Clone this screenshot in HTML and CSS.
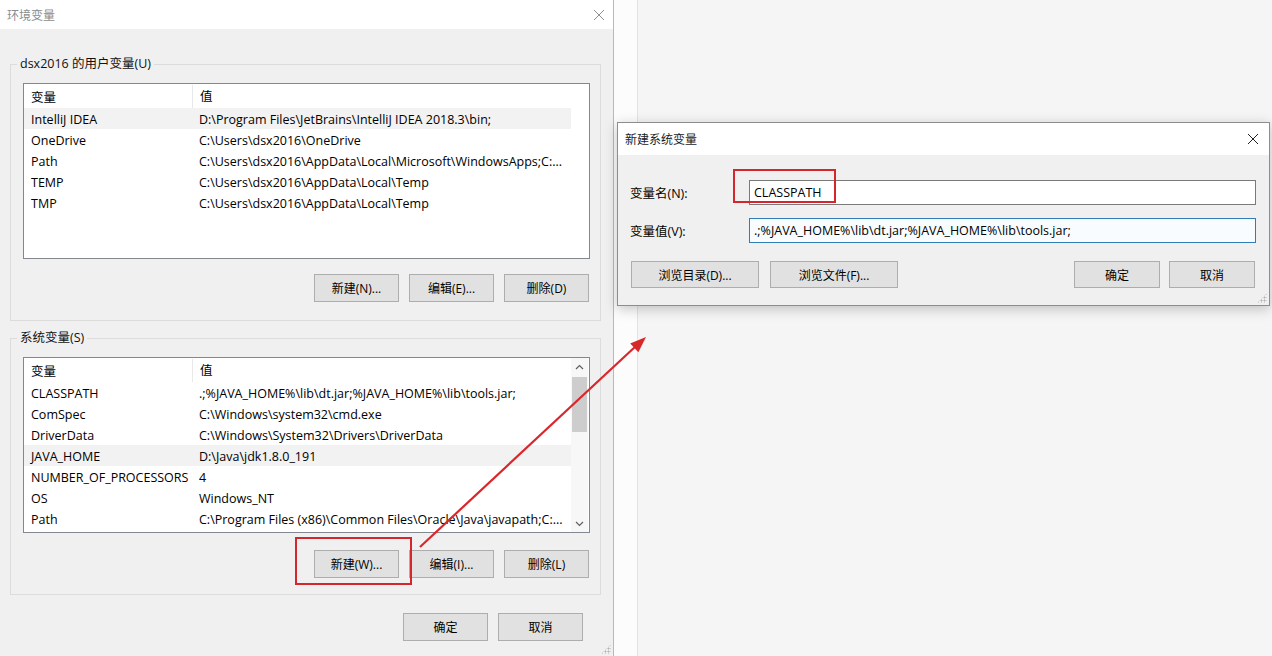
FILE: index.html
```html
<!DOCTYPE html>
<html lang="zh-CN">
<head>
    <meta charset="UTF-8">
    <title>环境变量</title>
    <link rel="stylesheet" href="styles.css">
</head>
<body>
<div class="screen">

    <!-- 环境变量 window -->
    <div class="env-window">
        <div class="titlebar">
            <span class="title">环境变量</span>
            <svg class="close" width="12" height="12" viewBox="0 0 12 12"><path d="M1 1L11 11M11 1L1 11" stroke="#8e8e8e" stroke-width="1" fill="none"/></svg>
        </div>

        <div class="env-body">
            <fieldset class="group">
                <legend>dsx2016 的用户变量(U)</legend>
                <div class="listview">
                    <div class="lv-cols">
                        <div class="lv-head"><span class="c-name">变量</span><span class="c-value">值</span></div>
                        <div class="lv-row hot"><span class="c-name">IntelliJ IDEA</span><span class="c-value">D:\Program Files\JetBrains\IntelliJ IDEA 2018.3\bin;</span></div>
                        <div class="lv-row"><span class="c-name">OneDrive</span><span class="c-value">C:\Users\dsx2016\OneDrive</span></div>
                        <div class="lv-row"><span class="c-name">Path</span><span class="c-value">C:\Users\dsx2016\AppData\Local\Microsoft\WindowsApps;C:...</span></div>
                        <div class="lv-row"><span class="c-name">TEMP</span><span class="c-value">C:\Users\dsx2016\AppData\Local\Temp</span></div>
                        <div class="lv-row"><span class="c-name">TMP</span><span class="c-value">C:\Users\dsx2016\AppData\Local\Temp</span></div>
                    </div>
                    <div class="lv-side"></div>
                </div>
                <div class="btn-row">
                    <button class="btn">新建(N)...</button>
                    <button class="btn">编辑(E)...</button>
                    <button class="btn">删除(D)</button>
                </div>
            </fieldset>

            <fieldset class="group group-sys">
                <legend>系统变量(S)</legend>
                <div class="listview">
                    <div class="lv-cols">
                        <div class="lv-head"><span class="c-name">变量</span><span class="c-value">值</span></div>
                        <div class="lv-row"><span class="c-name">CLASSPATH</span><span class="c-value">.;%JAVA_HOME%\lib\dt.jar;%JAVA_HOME%\lib\tools.jar;</span></div>
                        <div class="lv-row"><span class="c-name">ComSpec</span><span class="c-value">C:\Windows\system32\cmd.exe</span></div>
                        <div class="lv-row"><span class="c-name">DriverData</span><span class="c-value">C:\Windows\System32\Drivers\DriverData</span></div>
                        <div class="lv-row hot"><span class="c-name">JAVA_HOME</span><span class="c-value">D:\Java\jdk1.8.0_191</span></div>
                        <div class="lv-row"><span class="c-name">NUMBER_OF_PROCESSORS</span><span class="c-value">4</span></div>
                        <div class="lv-row"><span class="c-name">OS</span><span class="c-value">Windows_NT</span></div>
                        <div class="lv-row"><span class="c-name">Path</span><span class="c-value">C:\Program Files (x86)\Common Files\Oracle\Java\javapath;C:...</span></div>
                    </div>
                    <div class="lv-side scrollbar">
                        <div class="sb-arrow"><svg width="9" height="6" viewBox="0 0 9 6"><path d="M1 5L4.5 1.5L8 5" stroke="#606060" stroke-width="1.2" fill="none"/></svg></div>
                        <div class="sb-thumb"></div>
                        <div class="sb-track"></div>
                        <div class="sb-arrow"><svg width="9" height="6" viewBox="0 0 9 6"><path d="M1 1L4.5 4.5L8 1" stroke="#606060" stroke-width="1.2" fill="none"/></svg></div>
                    </div>
                </div>
                <div class="btn-row">
                    <div class="marked">
                        <button class="btn">新建(W)...</button>
                        <div class="mark mark-new"></div>
                    </div>
                    <button class="btn">编辑(I)...</button>
                    <button class="btn">删除(L)</button>
                </div>
            </fieldset>

            <div class="footer-row">
                <button class="btn">确定</button>
                <button class="btn">取消</button>
            </div>
        </div>
        <div class="grip"></div>
    </div>

    <!-- background with 新建系统变量 dialog -->
    <div class="desktop">
        <div class="dialog">
            <div class="dlg-title">
                <span>新建系统变量</span>
                <svg class="close" width="12" height="12" viewBox="0 0 12 12"><path d="M1 1L11 11M11 1L1 11" stroke="#222" stroke-width="1" fill="none"/></svg>
            </div>
            <div class="dlg-body">
                <div class="field">
                    <label class="field-label">变量名(N):</label>
                    <div class="field-box">
                        <div class="textbox">CLASSPATH</div>
                        <div class="mark mark-name"></div>
                    </div>
                </div>
                <div class="field">
                    <label class="field-label">变量值(V):</label>
                    <div class="field-box">
                        <div class="textbox focused">.;%JAVA_HOME%\lib\dt.jar;%JAVA_HOME%\lib\tools.jar;</div>
                    </div>
                </div>
                <div class="dlg-buttons">
                    <button class="btn btn-wide">浏览目录(D)...</button>
                    <button class="btn btn-wide">浏览文件(F)...</button>
                    <div class="spacer"></div>
                    <button class="btn btn-dlg">确定</button>
                    <button class="btn btn-dlg">取消</button>
                </div>
            </div>
            <div class="grip"></div>
        </div>
    </div>

    <!-- red annotation arrow -->
    <svg class="arrow" width="1272" height="656" viewBox="0 0 1272 656">
        <line x1="420" y1="547" x2="636" y2="346" stroke="#d9262b" stroke-width="2.2"/>
        <polygon points="646,337 638.4,352.3 630.2,343.5" fill="#d9262b"/>
    </svg>
</div>
</body>
</html>
```

FILE: styles.css
```css
* {
    box-sizing: border-box;
}
body {
    margin: 0;
    font-family: "Open Sans", "Noto Sans CJK SC", sans-serif;
    font-size: 12.5px;
    color: #000;
    background: #f5f5f5;
}
.screen {
    position: relative;
    display: flex;
    width: 1272px;
    height: 656px;
    overflow: hidden;
}

/* left window */
.env-window {
    position: relative;
    flex-shrink: 0;
    width: 614px;
    height: 656px;
    display: flex;
    flex-direction: column;
    background: #f0f0f0;
    border-right: 1px solid #b9b9b9;
}
.titlebar {
    height: 29px;
    flex-shrink: 0;
    background: #fff;
    display: flex;
    align-items: center;
    justify-content: space-between;
    padding: 0 8px 0 7px;
}
.titlebar .title {
    color: #8c8c8c;
    font-size: 12px;
}
.env-body {
    padding: 1px 12px 0 10px;
}
.group {
    margin: 26px 0 0;
    padding: 11px 10px 18px 12px;
    border: 1px solid #dcdcdc;
    min-width: 0;
}
.group legend {
    margin-left: -6px;
    padding: 0 3px;
    line-height: 16px;
    color: #111;
}
.group-sys {
    margin-top: 9px;
    padding-bottom: 16px;
}
.listview {
    display: flex;
    height: 176px;
    border: 1px solid #828790;
    background: #fff;
}
.lv-cols {
    flex: 1;
}
.lv-head {
    display: flex;
    height: 24px;
    align-items: center;
    padding-top: 1px;
}
.lv-head .c-value {
    border-left: 1px solid #e8e8e8;
    line-height: 23px;
}
.lv-row {
    display: flex;
    height: 21px;
    align-items: center;
    padding-top: 1px;
}
.lv-row.hot {
    background: #f2f2f2;
}
.c-name {
    width: 168px;
    flex-shrink: 0;
    padding-left: 7px;
    white-space: nowrap;
}
.c-value {
    flex: 1;
    padding-left: 7px;
    white-space: nowrap;
    overflow: hidden;
}
.lv-side {
    width: 18px;
}
.scrollbar {
    display: flex;
    flex-direction: column;
    background: #f7f7f7;
    margin-right: 1px;
    width: 17px;
}
.sb-arrow {
    height: 17px;
    display: flex;
    align-items: center;
    justify-content: center;
}
.sb-thumb {
    margin: 2px 1px 0;
    height: 55px;
    background: #cdcdcd;
}
.sb-track {
    flex: 1;
}
.btn-row {
    display: flex;
    justify-content: flex-end;
    gap: 10px;
    margin-top: 15px;
    padding-right: 1px;
}
.group-sys .btn-row {
    margin-top: 17px;
}
.btn {
    width: 85px;
    height: 28px;
    padding: 0;
    font: inherit;
    font-size: 12px;
    color: #000;
    background: #e1e1e1;
    border: 1px solid #adadad;
}
.footer-row {
    display: flex;
    justify-content: flex-end;
    gap: 10px;
    margin-top: 18px;
    padding-right: 18px;
}
.marked {
    position: relative;
}
.mark {
    position: absolute;
    border: 2px solid #d4262d;
    pointer-events: none;
}
.mark-new {
    left: -19px;
    top: -13px;
    width: 117px;
    height: 48px;
}
.grip {
    position: absolute;
    right: 2px;
    bottom: 2px;
    width: 10px;
    height: 10px;
    background: radial-gradient(circle, #b0b0b0 0.8px, transparent 1.2px) 0 0 / 3px 3px;
    clip-path: polygon(100% 0, 100% 100%, 0 100%);
}

/* right side */
.desktop {
    flex: 1;
    padding: 122px 0 0 3px;
    background: linear-gradient(to right, #fcfcfc 0 23px, #e2e2e2 23px 24px, #f5f5f5 24px);
}
.dialog {
    position: relative;
    width: 653px;
    height: 184px;
    background: #f0f0f0;
    border: 1px solid #8d8d8d;
    box-shadow: 0 3px 12px rgba(0, 0, 0, 0.22);
}
.dlg-title {
    height: 32px;
    background: #fff;
    display: flex;
    align-items: center;
    justify-content: space-between;
    padding: 0 10px 0 7px;
    color: #1a1a1a;
    font-size: 12px;
}
.dlg-body {
    padding: 25px 13px 0 12px;
}
.field {
    display: flex;
    align-items: center;
    margin-bottom: 13px;
}
.field-label {
    width: 119px;
    flex-shrink: 0;
}
.field-box {
    position: relative;
}
.textbox {
    width: 507px;
    height: 25px;
    line-height: 23px;
    padding-left: 4px;
    background: #fff;
    border: 1px solid #7a7a7a;
}
.textbox.focused {
    border-color: #2f7cb6;
    background: #f8fcff;
}
.mark-name {
    left: -16px;
    top: -11px;
    width: 103px;
    height: 34px;
}
.dlg-buttons {
    display: flex;
    gap: 11px;
    margin-top: 18px;
    padding-left: 1px;
    padding-right: 1px;
}
.dlg-buttons .spacer {
    flex: 1;
}
.btn-wide {
    width: 128px;
    height: 27px;
}
.btn-dlg {
    width: 86px;
    height: 27px;
}
.btn-dlg + .btn-dlg {
    margin-left: -2px;
}
.arrow {
    position: absolute;
    left: 0;
    top: 0;
    pointer-events: none;
}
```
